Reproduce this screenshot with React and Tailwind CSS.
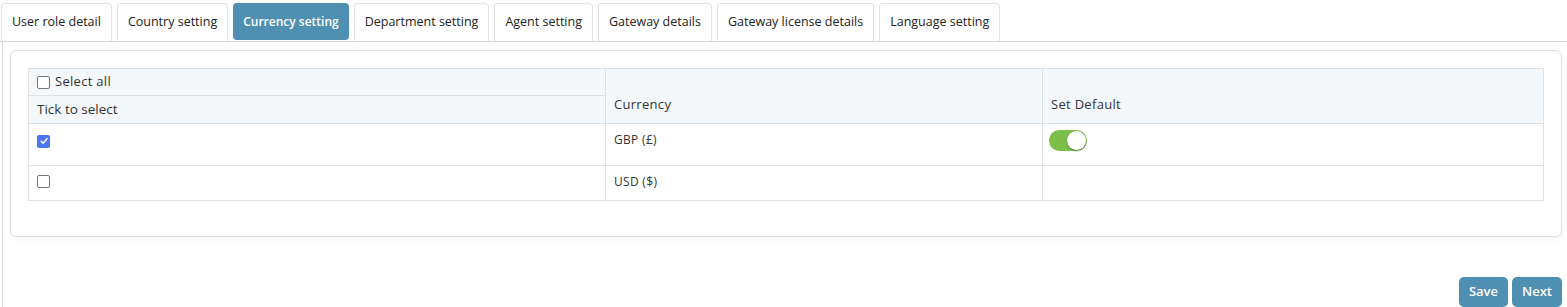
import React, { useState } from 'react';

const tabs = [
    'User role detail',
    'Country setting',
    'Currency setting',
    'Department setting',
    'Agent setting',
    'Gateway details',
    'Gateway license details',
    'Language setting',
];

const currencies = [
    { code: 'GBP', symbol: '£', checked: true, isDefault: true },
    { code: 'USD', symbol: '$', checked: false, isDefault: false },
];

function Checkbox({ checked }) {
    return checked ? (
        <span className="inline-flex items-center justify-center w-[13px] h-[13px] rounded-[2px] bg-[#4a76ef]">
            <svg viewBox="0 0 12 12" className="w-[10px] h-[10px]">
                <path d="M2.5 6.3 L5 8.6 L9.6 3.2" fill="none" stroke="#fff" strokeWidth="1.8" strokeLinecap="round" strokeLinejoin="round" />
            </svg>
        </span>
    ) : (
        <span className="inline-block w-[13px] h-[13px] rounded-[2px] border border-[#767676] bg-white" />
    );
}

function Toggle() {
    return (
        <span className="relative inline-block w-[38px] h-[21px] rounded-full bg-[#7cc04b]">
            <span className="absolute right-[1px] top-[1px] w-[19px] h-[19px] rounded-full bg-white shadow-[0_1px_2px_rgba(0,0,0,0.35)]" />
        </span>
    );
}

export default function App() {
    const [active] = useState('Currency setting');

    return (
        <div className="w-[1567px] h-[307px] bg-white text-[#333] font-['Open_Sans',sans-serif] overflow-hidden">
            {/* Tabs */}
            <div className="flex gap-[5px] pl-[1px] pt-[3px] border-b border-[#d6d6d6]">
                {tabs.map((t) => (
                    <div
                        key={t}
                        className={
                            t === active
                                ? 'h-[37px] px-[10px] flex items-center rounded-[4px] bg-[#4f8fb1] text-white text-[12px] font-semibold mb-[1px]'
                                : 'h-[38px] px-[10px] flex items-center rounded-t-[4px] border border-b-0 border-[#e3e3e3] text-[12.5px] text-[#222]'
                        }
                    >
                        {t}
                    </div>
                ))}
            </div>

            <div className="ml-[2px] border-l border-[#d6d6d6] h-full">
                <div className="pt-[8px] pl-[7px] pr-[5px]">
                    {/* Card */}
                    <div className="rounded-[6px] border border-[#dedede] shadow-[0_2px_6px_rgba(0,0,0,0.05)] px-[17px] pt-[17px] pb-[35px]">
                        <table className="w-full border-collapse text-[#333]">
                            <thead className="bg-[#f4f8fb]">
                                <tr className="h-[27px]">
                                    <th className="w-[577px] border border-[#dde2e6] px-[8px] text-left font-normal text-[13px] tracking-[0.3px]">
                                        <span className="flex items-center gap-[5px]">
                                            <Checkbox checked={false} />
                                            Select all
                                        </span>
                                    </th>
                                    <th rowSpan={2} className="w-[437px] border border-[#dde2e6] px-[8px] pb-[9px] align-bottom text-left font-normal text-[13px] tracking-[0.3px]">
                                        Currency
                                    </th>
                                    <th rowSpan={2} className="border border-[#dde2e6] px-[8px] pb-[9px] align-bottom text-left font-normal text-[13px] tracking-[0.3px]">
                                        Set Default
                                    </th>
                                </tr>
                                <tr className="h-[28px]">
                                    <th className="border border-[#dde2e6] px-[8px] text-left font-normal text-[13.5px]">
                                        Tick to select
                                    </th>
                                </tr>
                            </thead>
                            <tbody>
                                {currencies.map((c) => (
                                    <tr key={c.code} className={c.isDefault ? 'h-[42px]' : 'h-[35px]'}>
                                        <td className="border border-[#dde2e6] px-[8px] pt-[8px] align-top leading-none">
                                            <Checkbox checked={c.checked} />
                                        </td>
                                        <td className="border border-[#dde2e6] px-[8px] pt-[7px] align-top text-[12px] tracking-[0.3px]">
                                            {c.code} ({c.symbol})
                                        </td>
                                        <td className="border border-[#dde2e6] px-[6px] pt-[6px] align-top leading-none">
                                            {c.isDefault && <Toggle />}
                                        </td>
                                    </tr>
                                ))}
                            </tbody>
                        </table>
                    </div>

                    <div className="flex justify-end gap-[4px] mt-[40px]">
                        <button className="h-[30px] px-[10px] rounded-[5px] bg-[#4f8fb1] text-white text-[13px] font-semibold">
                            Save
                        </button>
                        <button className="h-[30px] px-[10px] rounded-[5px] bg-[#4f8fb1] text-white text-[13px] font-semibold">
                            Next
                        </button>
                    </div>
                </div>
            </div>
        </div>
    );
}
